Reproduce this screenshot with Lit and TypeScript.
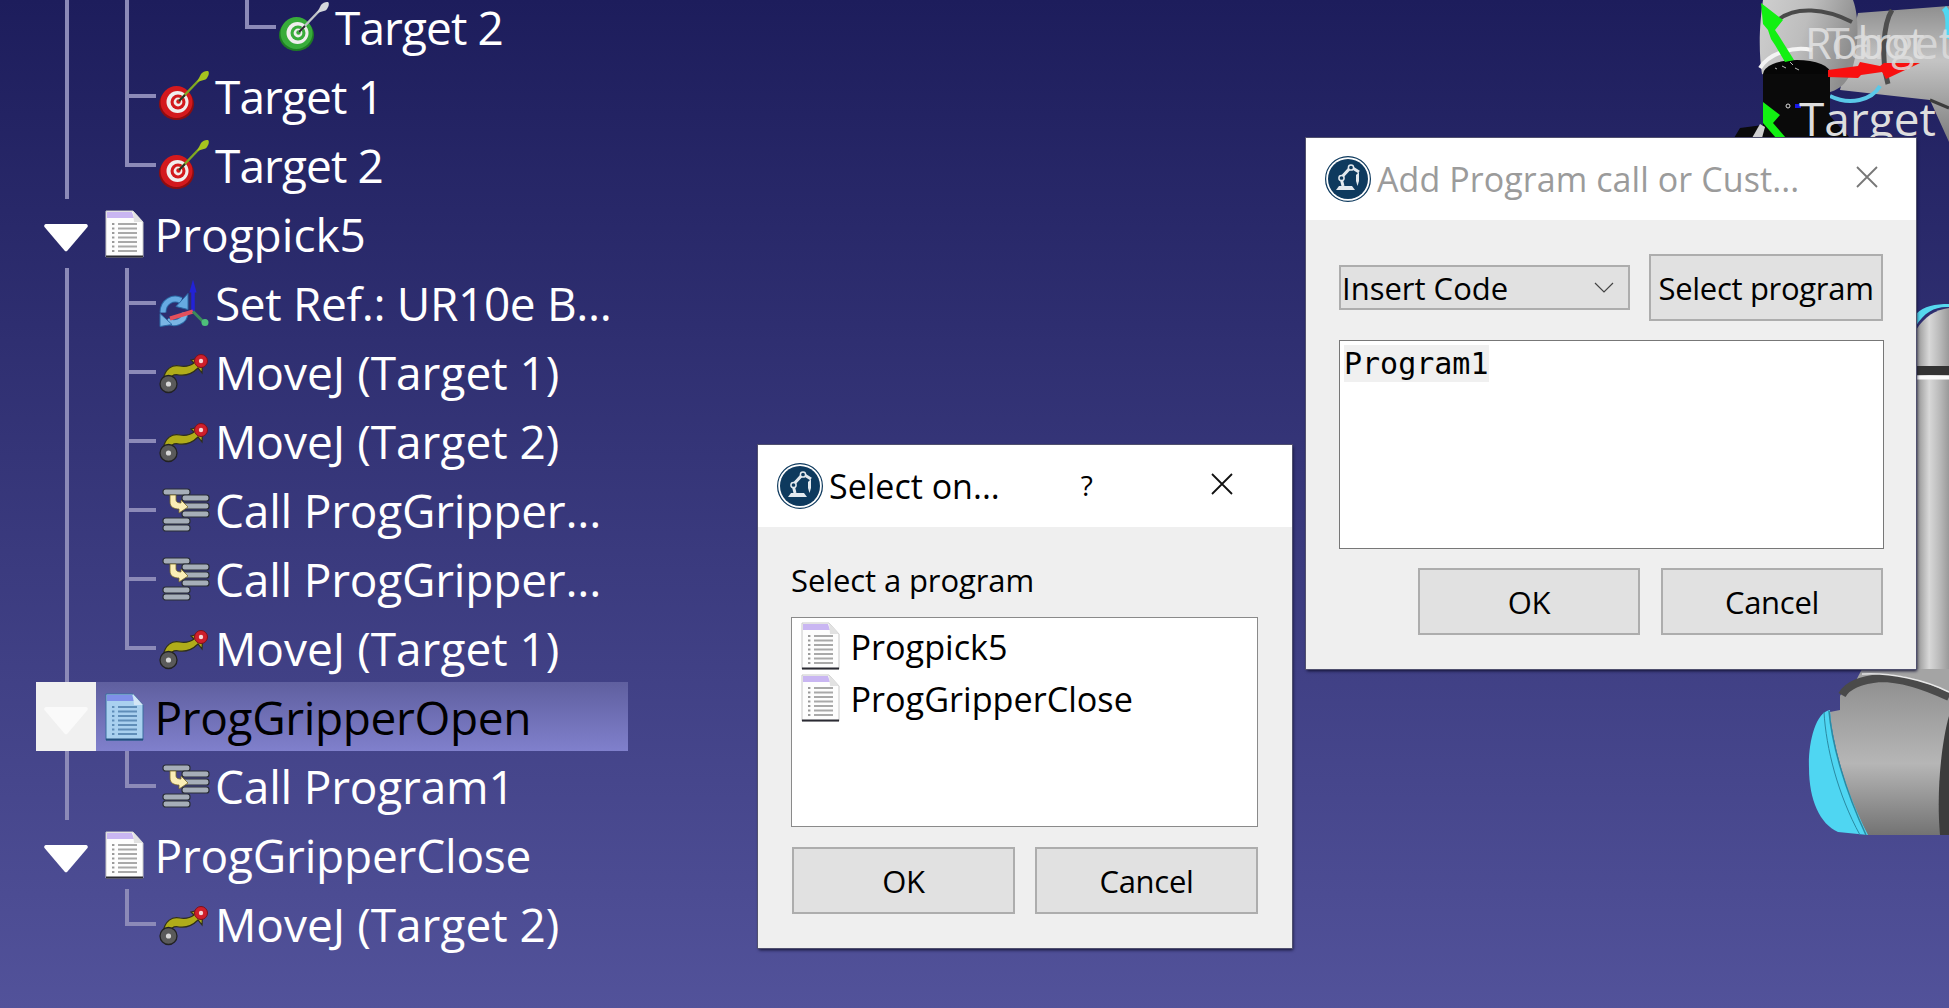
import { LitElement, html, css, svg } from "lit";
import { customElement } from "lit/decorators.js";

const iconStyles = css`
  .doc { width: 39px; height: 48px; display: block; flex: none; }
  .ico { width: 50px; height: 50px; display: block; overflow: visible; flex: none; }
  .logo { width: 46px; height: 46px; flex: none; display: block; }
`;

const docIcon = (blue = false) => html`<svg class="doc" viewBox="0 0 39 48">
  <path d="M1 1h27l10 11v35H1z" fill="${blue ? "#a9d0ef" : "#fdfdfd"}" stroke="${blue ? "#3a6ea0" : "#c8c8c8"}" stroke-width="1"/>
  <path d="M2 2h25l2 6H2z" fill="${blue ? "#7f8fe8" : "#c9b6f2"}"/>
  <path d="M28 1l10 11H29z" fill="${blue ? "#d3e6f6" : "#e2e2e2"}"/>
  <path d="M1 46.500h37" stroke="${blue ? "#245080" : "#2b2b33"}" stroke-width="2"/>
  ${[14, 18.5, 23, 27.5, 32, 36.5, 41].map(
    (y) => svg`<path d="M13 ${y}h19" stroke="${blue ? "#5f8db8" : "#a9a9a9"}" stroke-width="2"/><path d="M7 ${y}h2.4" stroke="${blue ? "#5f8db8" : "#9a9a9a"}" stroke-width="2"/>`
  )}
</svg>`;

const targetIcon = (green = false) => {
  const c1 = green ? "#38ac3a" : "#d3191d";
  const c2 = green ? "#1e7c24" : "#8d0d10";
  const shaft = green ? "#c0c4c8" : "#7fa822";
  const tip = green ? "#d5d8dc" : "#a6c41e";
  return html`<svg class="ico" viewBox="0 0 50 50">
    <ellipse cx="17.500" cy="33" rx="17.500" ry="16" fill="${c2}"/>
    <circle cx="17.500" cy="31" r="16" fill="${c1}"/>
    <circle cx="18.500" cy="31" r="11" fill="#f0eeee"/>
    <circle cx="19" cy="31" r="7.500" fill="${c1}"/>
    <circle cx="19" cy="31" r="4.400" fill="#f0eeee"/>
    <circle cx="19.500" cy="30.500" r="2.200" fill="${c1}"/>
    <path d="M20 30L41 8" stroke="${shaft}" stroke-width="2.400"/>
    <path d="M20 30l6-6" stroke="#2a2a2a" stroke-width="1.800"/>
    <path d="M38 11l4-8c2-2.500 6-3.500 7.500-2.500 1 2-.5 6-3 8z" fill="${tip}"/>
  </svg>`;
};

const moveIcon = () => html`<svg class="ico" viewBox="0 0 50 50">
  <path d="M4 33C6 22 13 17 21 19C27 20 31 19 35 16L32 13L44 10L43 26L39 21C34 26 27 29 20 28C15 27 12 29 11 33z" fill="#b0ac1a" stroke="#2e2e1a" stroke-width="1.200"/>
  <circle cx="9.500" cy="37" r="8.500" fill="#5a5a5a" stroke="#222" stroke-width="1.300"/>
  <circle cx="9.500" cy="37" r="2.600" fill="#d8d8d8"/>
  <circle cx="42" cy="14" r="6.500" fill="#cf1f2b" stroke="#7a1119" stroke-width="1"/>
  <circle cx="42" cy="14" r="2.200" fill="#f6d8d8"/>
</svg>`;

const bar = (x: number, y: number, w: number) =>
  svg`<rect x="${x}" y="${y}" width="${w}" height="6" rx="2.600" fill="#a6aeb8" stroke="#2a2e36" stroke-width="1.200"/>`;

const callIcon = () => html`<svg class="ico" viewBox="0 0 50 50">
  ${bar(4, 4, 27)}${bar(23, 10, 27)}${bar(23, 18, 27)}${bar(23, 26, 27)}${bar(4, 33, 27)}${bar(4, 40, 27)}
  <path d="M11 10v7c0 5 4 7 9 7v4l9-6-7-7v3c-3 0-5-1-5-3v-5z" fill="#fbeeb6" stroke="#7a6a2a" stroke-width="0.800"/>
</svg>`;

const refIcon = () => html`<svg class="ico" viewBox="0 0 50 47">
  <path d="M4 33C4 22 14 17 22 21" fill="none" stroke="#2c6aa6" stroke-width="7"/>
  <path d="M4 33C4 22 14 17 22 21" fill="none" stroke="#66aae2" stroke-width="5"/>
  <path d="M29 14v16l-12-3z" fill="#66aae2" stroke="#2c6aa6" stroke-width="1"/>
  <path d="M26 33C26 42 15 46 8 41" fill="none" stroke="#2c6aa6" stroke-width="7"/>
  <path d="M26 33C26 42 15 46 8 41" fill="none" stroke="#7ab5e4" stroke-width="5"/>
  <path d="M1 34v13l12-2z" fill="#7ab5e4" stroke="#2c6aa6" stroke-width="1"/>
  <path d="M34 32V8" stroke="#2222d6" stroke-width="3.500"/>
  <path d="M34 0l-3.600 13h7.200z" fill="#2222d6"/>
  <path d="M34 32L11 39" stroke="#e4505c" stroke-width="4"/>
  <path d="M34 32l11 11" stroke="#3a8a5a" stroke-width="3"/>
  <circle cx="46" cy="43" r="3.500" fill="#4ec07a"/>
</svg>`;

const logo = () => html`<svg class="logo" viewBox="0 0 46 46">
  <circle cx="23" cy="23" r="22.400" fill="#fff" stroke="#0e3a5e" stroke-width="1.200"/>
  <circle cx="23" cy="23" r="20" fill="#0e3a5e"/>
  <path d="M11 34l3-4h13l3 4z" fill="#e3e9ee"/>
  <path d="M18 30l-2-8 10-11 8 5" fill="none" stroke="#e3e9ee" stroke-width="3"/>
  <circle cx="16.500" cy="22" r="2.600" fill="#0e3a5e" stroke="#e3e9ee" stroke-width="1.500"/>
  <circle cx="26" cy="11.500" r="2.600" fill="#0e3a5e" stroke="#e3e9ee" stroke-width="1.500"/>
  <path d="M34 16v9l-1.500 5-1.500-5v-6z" fill="#e3e9ee"/>
</svg>`;

type G = "" | "v" | "t" | "l";
type Row = { g: G[]; exp?: boolean; icon: unknown; text: string; sel?: boolean; fit: string };

const rows: Row[] = [
  { g: ["v", "v", "", "l"], icon: targetIcon(true), text: "Target 2", fit: "tight" },
  { g: ["v", "t"], icon: targetIcon(), text: "Target 1", fit: "tight" },
  { g: ["v", "l"], icon: targetIcon(), text: "Target 2", fit: "tight" },
  { g: [], exp: true, icon: docIcon(), text: "Progpick5", fit: "open" },
  { g: ["v", "t"], icon: refIcon(), text: "Set Ref.: UR10e B...", fit: "" },
  { g: ["v", "t"], icon: moveIcon(), text: "MoveJ (Target 1)", fit: "open" },
  { g: ["v", "t"], icon: moveIcon(), text: "MoveJ (Target 2)", fit: "open" },
  { g: ["v", "t"], icon: callIcon(), text: "Call ProgGripper...", fit: "mid" },
  { g: ["v", "t"], icon: callIcon(), text: "Call ProgGripper...", fit: "mid" },
  { g: ["v", "l"], icon: moveIcon(), text: "MoveJ (Target 1)", fit: "open" },
  { g: [], exp: true, icon: docIcon(true), text: "ProgGripperOpen", sel: true, fit: "" },
  { g: ["v", "l"], icon: callIcon(), text: "Call Program1", fit: "mid" },
  { g: [], exp: true, icon: docIcon(), text: "ProgGripperClose", fit: "mid" },
  { g: ["", "l"], icon: moveIcon(), text: "MoveJ (Target 2)", fit: "open" },
];

@customElement("tree-view")
class TreeView extends LitElement {
  static styles = [iconStyles, css`
    :host { display: block; position: relative; margin-top: -8px; width: 640px; }
    .row { display: flex; height: 69px; align-items: center; position: relative; }
    .guide { width: 60px; height: 69px; flex: none; position: relative; }
    .guide:first-child { margin-left: 36px; }
    .guide.v::before, .guide.t::before { content: ""; position: absolute; left: 29px; top: 0; bottom: 0; width: 4px; background: #8c8ab8; }
    .guide.l::before { content: ""; position: absolute; left: 29px; top: 0; height: 37px; width: 4px; background: #8c8ab8; }
    .guide.t::after, .guide.l::after { content: ""; position: absolute; left: 33px; top: 33px; width: 27px; height: 4px; background: #8c8ab8; }
    .iconcell { width: 50px; flex: none; display: flex; align-items: center; justify-content: center; margin: 0 6px 0 3px; }
    .text { font: 46px/69px "Open Sans", sans-serif; color: #fff; white-space: nowrap; letter-spacing: -0.350px; margin-top: 2px; }
    .text.open { letter-spacing: 0; }
    .text.mid { letter-spacing: -0.200px; }
    .text.tight { letter-spacing: -0.900px; }
    .exp { width: 60px; height: 69px; flex: none; margin-left: 36px; display: flex; align-items: center; justify-content: center; }
    .tri { width: 46px; height: 29px; fill: #fff; margin-top: 7px; }
    .pname { display: flex; align-items: center; gap: 10.500px; height: 69px; width: 532px; box-sizing: border-box; padding-left: 9px; }
    .sel .pname { background: linear-gradient(#5f5f9f, #8080cc); }
    .sel .text { color: #000; }
    .sel .exp { background: #f0f0f0; }
    .sel .tri { fill: #fafafa; }
  `];
  render() {
    return rows.map((r) => {
      if (r.exp) {
        return html`<div class="row ${r.sel ? "sel" : ""}">
          <div class="exp"><svg class="tri" viewBox="0 0 46 29"><path d="M3 1h40a2 2 0 0 1 1.500 3L24.500 27.500a2 2 0 0 1-3 0L1.500 4A2 2 0 0 1 3 1z"/></svg></div>
          <div class="pname">${r.icon}<span class="text ${r.fit}">${r.text}</span></div>
        </div>`;
      }
      return html`<div class="row">
        ${r.g.map((g) => html`<div class="guide ${g}"></div>`)}
        <div class="iconcell">${r.icon}</div>
        <span class="text ${r.fit}">${r.text}</span>
      </div>`;
    });
  }
}

@customElement("robot-scene")
class RobotScene extends LitElement {
  static styles = css`
    :host { position: absolute; inset: 0; display: block; }
    svg { width: 1949px; height: 1008px; display: block; }
    text { font-family: "Open Sans", sans-serif; }
  `;
  render() {
    return html`<svg viewBox="0 0 1949 1008">
      <defs>
        <linearGradient id="gv" x1="0" y1="0" x2="0" y2="1"><stop offset="0" stop-color="#8f8f8f"/><stop offset="0.4" stop-color="#c4c4c4"/><stop offset="1" stop-color="#7d7d7d"/></linearGradient>
        <linearGradient id="gt" x1="0" y1="0" x2="1" y2="0.300"><stop offset="0" stop-color="#cfcfcf"/><stop offset="0.5" stop-color="#bdbdbd"/><stop offset="1" stop-color="#8d8d8d"/></linearGradient>
        <linearGradient id="gb" x1="0" y1="0" x2="0" y2="1"><stop offset="0" stop-color="#8e8e8e"/><stop offset="0.55" stop-color="#b6b6b6"/><stop offset="1" stop-color="#737373"/></linearGradient>
        <linearGradient id="gh" x1="0" y1="0" x2="1" y2="0"><stop offset="0" stop-color="#8f8f8f"/><stop offset="0.4" stop-color="#d8d8d8"/><stop offset="0.7" stop-color="#bcbcbc"/><stop offset="1" stop-color="#9a9a9a"/></linearGradient>
      </defs>

      <!-- upper wrist -->
      <path d="M1949 6L1858 13L1840 90L1930 100L1949 142z" fill="url(#gv)"/>
      <path d="M1763 0H1853C1860 18 1858 50 1853 66C1848 86 1835 94 1815 94L1762 74C1758 50 1760 20 1763 0z" fill="url(#gt)"/>
      <path d="M1778 20C1795 6 1825 8 1852 22" fill="none" stroke="#4a4a4a" stroke-width="4"/>
      <path d="M1892 10C1883 24 1881 60 1888 84" fill="none" stroke="#4e4e4e" stroke-width="5"/>
      <path d="M1760 68C1770 52 1795 46 1812 50" fill="none" stroke="#f4f4f4" stroke-width="4"/>
      <path d="M1930 100L1949 108" stroke="#3c3c3c" stroke-width="3"/>
      <path d="M1944 8C1950 14 1949 32 1946 38" stroke="#4fd8f2" stroke-width="6" fill="none"/>
      <path d="M1830 96C1850 106 1872 100 1880 86" fill="none" stroke="#5ac8e8" stroke-width="4"/>

      <!-- tool flange -->
      <ellipse cx="1797" cy="74" rx="34" ry="14" fill="#060606"/>
      <path d="M1763 74V125L1740 128L1734 138H1850L1830 116V74z" fill="#0a0a0a"/>
      <path d="M1752 138l8-14 5 3-3 11z" fill="#d0d0d0"/>
      <path d="M1782 66l4 2M1790 62l3 3M1795 68l4 2M1775 68l2 1" stroke="#bbb" stroke-width="1"/>

      <!-- axes -->
      <path d="M1761 3L1783 20L1775 30L1779 36L1794 60L1785 62L1775 45L1771 39L1768 30L1763 24z" fill="#12f012"/>
      <path d="M1828 70L1858 66L1860 62L1880 66L1884 63L1920 63L1886 79L1882 72L1861 75L1858 78L1828 77z" fill="#f80f0f"/>
      <path d="M1763 102L1780 115L1773 123L1786 138H1776L1763 123z" fill="#12f012"/>
      <rect x="1795" y="104" width="6" height="4" fill="#1818e8"/>
      <circle cx="1788" cy="106" r="2" fill="none" stroke="#ddd"/>

      <!-- labels painted in the 3D view -->
      <text x="1805" y="59" font-size="43" fill="#e4e4e4" fill-opacity="0.850">Robot</text>
      <text x="1826" y="59" font-size="43" fill="#dcdcdc" fill-opacity="0.850">Target</text>
      <text x="1799" y="136" font-size="46" fill="#dedede">Target</text>

      <!-- right strip behind the dialog -->
      <path d="M1916 330C1925 316 1935 310 1949 308V690H1916z" fill="url(#gh)"/>
      <path d="M1916 326C1924 312 1936 306 1949 307V304C1935 304 1924 306 1916 314z" fill="#55d8ee"/>
      <path d="M1916 366H1949V375H1916z" fill="#333"/>
      <path d="M1916 377.500H1949" stroke="#fafafa" stroke-width="4"/>

      <!-- lower elbow with cyan cap -->
      <path d="M1862 669H1949V700L1880 690L1850 692z" fill="#a4a4a4"/>
      <path d="M1840 696C1846 684 1860 678 1880 676L1949 697V835H1866C1845 790 1832 740 1830 712L1840 710z" fill="url(#gb)"/>
      <path d="M1842 695C1848 684 1862 680 1880 678C1905 678 1930 688 1949 697" fill="none" stroke="#4a4a4a" stroke-width="8"/>
      <path d="M1862 674C1890 672 1925 680 1949 692" fill="none" stroke="#e8e8e8" stroke-width="1.500"/>
      <path d="M1949 716C1942 740 1936 790 1940 835H1949z" fill="#3c3c3c"/>
      <path d="M1830 710C1815 712 1808 745 1809 768C1809 800 1820 824 1838 832L1868 835C1845 790 1832 745 1830 710z" fill="#4fd6f2"/>
      <path d="M1829 711C1832 745 1845 790 1866 835" fill="none" stroke="#2b8aa2" stroke-width="1.500"/>
      <path d="M1824 712C1826 748 1838 795 1860 835" fill="none" stroke="#2b8aa2" stroke-width="1"/>
    </svg>`;
  }
}

@customElement("dlg-button")
class DlgButton extends LitElement {
  static styles = css`
    :host { display: block; }
    .b { height: 100%; box-sizing: border-box; background: #e1e1e1; border: 2px solid #adadad; display: flex; align-items: center; justify-content: center; font: 31px "Open Sans", sans-serif; letter-spacing: -0.300px; color: #000; white-space: nowrap; }
  `;
  render() { return html`<div class="b"><slot></slot></div>`; }
}

@customElement("app-root")
class AppRoot extends LitElement {
  static styles = [iconStyles, css`
    :host { display: block; position: relative; width: 1949px; height: 1008px; overflow: hidden; background: linear-gradient(#1d1d5c, #52529a); font-family: "Open Sans", sans-serif; }
    .win { position: absolute; background: #efefef; box-shadow: 0 0 0 1px #50506e, 1px 2px 3px #101030; display: flex; flex-direction: column; box-sizing: border-box; }
    .w1 { left: 758px; top: 445px; width: 534px; height: 503px; }
    .w2 { left: 1306px; top: 138px; width: 610px; height: 531px; }
    .title { background: #fff; display: flex; align-items: center; flex: none; height: 82px; padding-left: 19px; gap: 6px; }
    .ttext { font-size: 34px; color: #000; white-space: nowrap; }
    .w2 .ttext { color: #9b9b9b; letter-spacing: 0.080px; }
    .help { font-size: 28px; margin-left: 73px; width: 16px; text-align: center; margin-top: -3px; }
    .close { width: 22px; height: 22px; display: block; stroke: #111; stroke-width: 1.800; fill: none; margin-top: -4px; }
    .w1 .close { margin-left: 110px; }
    .w2 .close { margin-left: 51px; stroke: #777; }
    .w1 .body { padding: 34px 34px 33px 33px; display: flex; flex-direction: column; flex: 1; }
    .lab { font-size: 31px; line-height: 38px; letter-spacing: -0.100px; height: 56px; color: #000; white-space: nowrap; }
    .list { height: 210px; box-sizing: border-box; border: 1.500px solid #8a8a8a; background: #fff; padding: 2px 9px; }
    .item { display: flex; align-items: center; gap: 10.500px; height: 52px; font-size: 34.200px; color: #000; white-space: nowrap; }
    .btns { display: flex; gap: 20px; margin-top: 20px; padding-left: 1px; }
    .btns dlg-button { flex: 1; height: 67px; }
    .w2 .body { padding: 0 33px; flex: 1; display: flex; flex-direction: column; }
    .top { display: flex; align-items: center; gap: 19px; height: 67px; margin-top: 34px; }
    .combo { width: 291px; height: 45px; box-sizing: border-box; background: #e1e1e1; border: 2px solid #adadad; display: flex; align-items: center; justify-content: space-between; padding: 0 14px 0 1px; font-size: 31px; color: #000; white-space: nowrap; }
    .combo svg { width: 20px; height: 12px; fill: none; stroke: #444; stroke-width: 1.200; }
    .selbtn { width: 234px; height: 67px; }
    .ta { margin-top: 19px; width: 545px; height: 209px; box-sizing: border-box; border: 1.500px solid #777; background: #fff; padding: 4px; }
    .code { display: inline-block; font: 30px/37px "DejaVu Sans Mono", monospace; background: #f0f0f0; color: #000; }
    .btns2 { display: flex; justify-content: flex-end; gap: 21px; margin-top: 19px; }
    .btns2 dlg-button { width: 222px; height: 67px; }
  `];
  render() {
    const x = html`<svg class="close" viewBox="0 0 22 22"><path d="M1 1l20 20M21 1L1 21"/></svg>`;
    return html`
      <robot-scene></robot-scene>
      <tree-view></tree-view>
      <section class="win w1">
        <div class="title">${logo()}<span class="ttext">Select on...</span><span class="help">?</span>${x}</div>
        <div class="body">
          <div class="lab">Select a program</div>
          <div class="list">
            <div class="item">${docIcon()}<span>Progpick5</span></div>
            <div class="item">${docIcon()}<span>ProgGripperClose</span></div>
          </div>
          <div class="btns"><dlg-button>OK</dlg-button><dlg-button>Cancel</dlg-button></div>
        </div>
      </section>
      <section class="win w2">
        <div class="title">${logo()}<span class="ttext">Add Program call or Cust...</span>${x}</div>
        <div class="body">
          <div class="top">
            <div class="combo"><span>Insert Code</span><svg viewBox="0 0 20 12"><path d="M1 1l9 9 9-9"/></svg></div>
            <dlg-button class="selbtn">Select program</dlg-button>
          </div>
          <div class="ta"><span class="code">Program1</span></div>
          <div class="btns2"><dlg-button>OK</dlg-button><dlg-button>Cancel</dlg-button></div>
        </div>
      </section>
    `;
  }
}
